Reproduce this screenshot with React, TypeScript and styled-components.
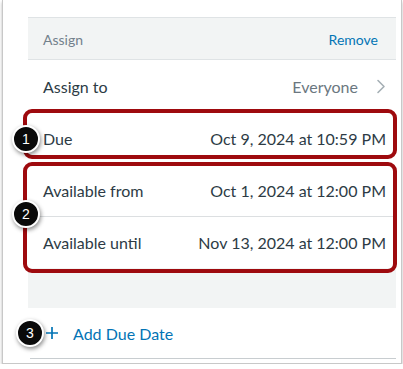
import styled, { createGlobalStyle } from "styled-components";

const GlobalStyle = createGlobalStyle`
  html, body {
    margin: 0;
    padding: 0;
    background: #ffffff;
    font-family: Lato, "Liberation Sans", Arial, sans-serif;
  }
  * {
    box-sizing: border-box;
  }
`;

type DateRow = {
  label: string;
  value: string;
};

const dueRow: DateRow = { label: "Due", value: "Oct 9, 2024 at 10:59 PM" };

const availableRows: DateRow[] = [
  { label: "Available from", value: "Oct 1, 2024 at 12:00 PM" },
  { label: "Available until", value: "Nov 13, 2024 at 12:00 PM" },
];

const ChevronRight = () => (
  <svg width="10" height="15" viewBox="0 0 10 15" fill="none">
    <polyline
      points="2,1.5 8,7.5 2,13.5"
      stroke="#a5afb5"
      strokeWidth="1.6"
      strokeLinecap="round"
      strokeLinejoin="round"
    />
  </svg>
);

const PlusIcon = () => (
  <svg width="14" height="14" viewBox="0 0 14 14" fill="none">
    <path d="M7 1v12M1 7h12" stroke="#0374b5" strokeWidth="1.7" />
  </svg>
);

function App() {
  return (
    <>
      <GlobalStyle />
      <Frame>
        <Panel>
          <Header>
            <HeaderTitle>Assign</HeaderTitle>
            <LinkText>Remove</LinkText>
          </Header>
          <Row>
            <Label>Assign to</Label>
            <Trailing>
              <Muted>Everyone</Muted>
              <ChevronRight />
            </Trailing>
          </Row>
          <Row>
            <Label>{dueRow.label}</Label>
            <Value>{dueRow.value}</Value>
          </Row>
          {availableRows.map((row, idx) => (
            <Row key={row.label} $divider={idx > 0}>
              <Label>{row.label}</Label>
              <Value>{row.value}</Value>
            </Row>
          ))}
          <Filler />
        </Panel>
        <AddRow>
          <PlusIcon />
          <AddText>Add Due Date</AddText>
        </AddRow>

        <Highlight $top={109} $height={50} />
        <Highlight $top={162} $height={111} />
        <Badge $left={9} $top={125}>1</Badge>
        <Badge $left={9} $top={200}>2</Badge>
        <Badge $left={13} $top={319}>3</Badge>
      </Frame>
    </>
  );
}

export default App;

const Frame = styled("div")`
  position: relative;
  margin-left: 2px;
  width: 400px;
  height: 364px;
  padding: 17px 5px 0 25px;
  border: 1px solid #c8c8c8;
  border-top: none;
  box-shadow: 0 2px 3px rgba(0, 0, 0, 0.28);
  background: #ffffff;
`;

const Panel = styled("div")`
  display: flex;
  flex-direction: column;
  background: #f2f4f4;
  border-top: 1px solid #dfe3e5;
`;

const Header = styled("div")`
  display: flex;
  align-items: center;
  justify-content: space-between;
  height: 42px;
  padding: 2px 18px 0 15px;
  border-bottom: 1px solid #dfe3e5;
`;

const HeaderTitle = styled("span")`
  font-size: 14px;
  color: #73818c;
`;

const LinkText = styled("span")`
  font-size: 14px;
  color: #0374b5;
`;

const Row = styled("div")<{ $divider?: boolean }>`
  display: flex;
  align-items: center;
  justify-content: space-between;
  height: 52px;
  padding: 0 10px 0 15px;
  background: #ffffff;
  border-top: ${(p) => (p.$divider ? "1px solid #dcdfe1" : "none")};
  font-size: 16px;
  color: #2d3b45;
`;

const Label = styled("span")``;

const Value = styled("span")``;

const Trailing = styled("span")`
  display: flex;
  align-items: center;
  gap: 18px;
`;

const Muted = styled("span")`
  color: #6b7780;
`;

const Filler = styled("div")`
  height: 40px;
`;

const AddRow = styled("div")`
  display: flex;
  align-items: center;
  gap: 14px;
  height: 51px;
  padding: 0 0 0 15px;
  margin-left: 2px;
  border-bottom: 1px solid #c8cdd0;
`;

const AddText = styled("span")`
  font-size: 16px;
  color: #0374b5;
`;

const Highlight = styled("div")<{ $top: number; $height: number }>`
  position: absolute;
  left: 20px;
  top: ${(p) => p.$top}px;
  width: 374px;
  height: ${(p) => p.$height}px;
  border: 4px solid #9e0a0e;
  border-radius: 9px;
  pointer-events: none;
`;

const Badge = styled("div")<{ $left: number; $top: number }>`
  position: absolute;
  left: ${(p) => p.$left}px;
  top: ${(p) => p.$top}px;
  width: 28px;
  height: 28px;
  border-radius: 50%;
  background: #0a0a0a;
  border: 2px solid #ffffff;
  box-shadow: 1px 2px 4px rgba(0, 0, 0, 0.45);
  display: flex;
  align-items: center;
  justify-content: center;
  color: #ffffff;
  font-size: 14px;
  font-family: "Liberation Sans", Arial, sans-serif;
`;
